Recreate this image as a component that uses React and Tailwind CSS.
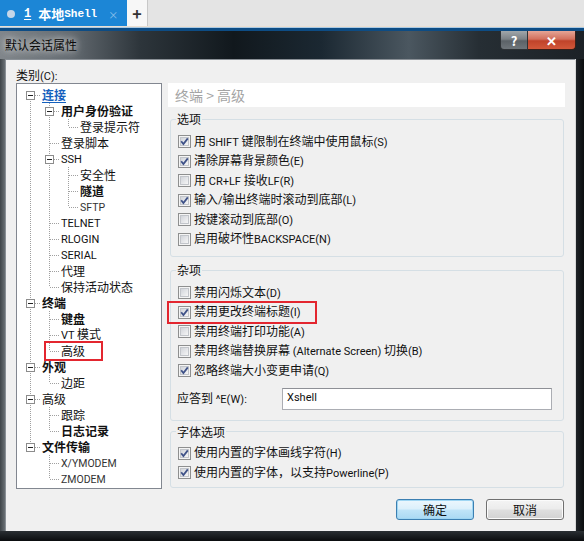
import React from 'react';

const tree = [
  [0, '连接', { exp: 1, bold: 1, blue: 1 }],
  [1, '用户身份验证', { exp: 1, bold: 1 }],
  [2, '登录提示符'],
  [1, '登录脚本'],
  [1, 'SSH', { exp: 1 }],
  [2, '安全性'],
  [2, '隧道', { bold: 1 }],
  [2, 'SFTP', { small: 1 }],
  [1, 'TELNET'],
  [1, 'RLOGIN'],
  [1, 'SERIAL'],
  [1, '代理'],
  [1, '保持活动状态'],
  [0, '终端', { exp: 1, bold: 1 }],
  [1, '键盘', { bold: 1 }],
  [1, 'VT 模式'],
  [1, '高级', { red: 1 }],
  [0, '外观', { exp: 1, bold: 1 }],
  [1, '边距'],
  [0, '高级', { exp: 1 }],
  [1, '跟踪'],
  [1, '日志记录', { bold: 1 }],
  [0, '文件传输', { exp: 1, bold: 1 }],
  [1, 'X/YMODEM', { small: 1 }],
  [1, 'ZMODEM', { small: 1 }],
];

function T({ s, small }) {
  const parts = s.split(/([\x20-\x7e]+)/).filter((p) => p !== '');
  return parts.map((p, i) =>
    /[\x21-\x7e]/.test(p) ? (
      <span key={i} className={"font-['Roboto','Liberation_Sans',sans-serif] " + (small ? 'text-[10.5px]' : 'text-[11px]')}>
        {p}
      </span>
    ) : (
      <span key={i}>{p}</span>
    )
  );
}

function hasLater(i) {
  const L = tree[i][0];
  for (let j = i + 1; j < tree.length; j++) {
    if (tree[j][0] < L) return false;
    if (tree[j][0] === L) return true;
  }
  return false;
}

function ancestor(i, d) {
  for (let j = i - 1; j >= 0; j--) if (tree[j][0] === d) return j;
  return -1;
}

const LINE = '#a0a0a0';

function TreeRow({ i }) {
  const [L, text, o = {}] = tree[i];
  const w = 19 * L + 25;
  const parts = [];
  for (let d = 0; d < L; d++) {
    const a = ancestor(i, d);
    if (a >= 0 && hasLater(a)) {
      const x = 13 + 19 * d + 0.5;
      parts.push(<line key={'v' + d} x1={x} y1={0} x2={x} y2={16} stroke={LINE} strokeDasharray="1 1" />);
    }
  }
  const c = 13 + 19 * L;
  const x = c + 0.5;
  if (i > 0) parts.push(<line key="top" x1={x} y1={0} x2={x} y2={8} stroke={LINE} strokeDasharray="1 1" />);
  if (hasLater(i)) parts.push(<line key="bot" x1={x} y1={8} x2={x} y2={16} stroke={LINE} strokeDasharray="1 1" />);
  parts.push(<line key="h" x1={c + 1} y1={8.5} x2={c + 11} y2={8.5} stroke={LINE} strokeDasharray="1 1" />);
  if (o.exp) {
    parts.push(<rect key="box" x={c - 3.5} y={4.5} width={8} height={8} fill="#fff" stroke="#8c8c8c" />);
    parts.push(<line key="minus" x1={c - 2} y1={8.5} x2={c + 3} y2={8.5} stroke="#222" />);
  }
  return (
    <div className="relative flex h-[16px] items-center">
      <svg width={w} height={16} className="shrink-0">{parts}</svg>
      <span
        className={
          'whitespace-nowrap leading-[16px] text-[12px] ' +
          (o.bold ? 'font-bold ' : '') +
          (o.blue ? 'text-[#1560bd] underline underline-offset-2 ' : o.small ? 'text-[#333] ' : 'text-[#111] ')
        }
      >
        <T s={text} small={o.small} />
      </span>
      {o.red ? <div className="absolute left-[27px] top-[-2px] h-[20px] w-[59px] border-2 border-[#e3262f]" /> : null}
    </div>
  );
}

function Check({ checked }) {
  return (
    <svg width="13" height="13" viewBox="0 0 13 13" className="shrink-0">
      <defs>
        <linearGradient id="cbg" x1="0" y1="0" x2="1" y2="1">
          <stop offset="0" stopColor="#cfd2d8" />
          <stop offset="1" stopColor="#f8f8f8" />
        </linearGradient>
      </defs>
      <rect x="0.5" y="0.5" width="12" height="12" fill="#f4f4f4" stroke="#8e8f8f" />
      <rect x="2.5" y="2.5" width="8" height="8" fill="url(#cbg)" stroke="#c2c5ca" />
      {checked ? (
        <path d="M3.2 6.2 L5.4 9 L9.8 3.4" stroke="#3f5288" strokeWidth="1.8" fill="none" strokeLinejoin="miter" />
      ) : null}
    </svg>
  );
}

function CheckRow({ checked, s, red }) {
  return (
    <div className="relative flex h-[19.5px] items-center gap-[3px] pl-[7px]">
      <Check checked={checked} />
      <span className="whitespace-nowrap text-[12px] leading-[16px] text-[#111]">
        <T s={s} />
      </span>
      {red ? <div className="absolute left-[-4px] top-[-2px] h-[23px] w-[150px] border-2 border-[#e3262f]" /> : null}
    </div>
  );
}

function Group({ title, children, className = '' }) {
  return (
    <fieldset className={'ml-[2px] mr-[1px] rounded-[3px] border border-[#d5dfe5] ' + className}>
      <legend className="ml-[5px] px-[1px] text-[12px] leading-[16px] text-[#111]">{title}</legend>
      {children}
    </fieldset>
  );
}

export default function App() {
  return (
    <div className="h-[541px] w-[584px] overflow-hidden bg-[#e4e4e4] font-['Noto_Sans_CJK_SC','Liberation_Sans',sans-serif] text-[12px]">
      {/* tab bar */}
      <div className="flex h-[27px] border-b border-[#eadfd2] bg-[#e4e4e4]">
        <div className="flex w-[127px] items-center bg-[#1c86d6] pt-[2px]">
          <div className="ml-[7px] h-[8px] w-[8px] rounded-full bg-[#c5d6e8]" />
          <span className="ml-[9px] font-['Liberation_Mono',monospace] text-[12px] font-bold text-white underline underline-offset-2">1</span>
          <span className="ml-[7px] text-[13px] font-bold text-white">本地</span>
          <span className="font-['Liberation_Mono',monospace] text-[11px] font-bold text-white">Shell</span>
          <span className="ml-[11px] text-[10px] text-[#8cc0ea]">×</span>
        </div>
        <div className="flex w-[21px] items-center justify-center border-r border-[#c8c8c8] bg-[#f7f7f7] text-[16px] font-bold leading-none text-[#333]">
          +
        </div>
      </div>
      <div className="h-[1px] bg-[#a9c9e4]" />
      <div className="h-[3px] bg-[#0d4c84]" />

      {/* dialog */}
      <div className="flex h-[510px] flex-col">
        <div className="flex h-[28px] items-start bg-[linear-gradient(90deg,#80868b_0%,#646b71_12%,#2d353b_24%,#11181d_40%,#1b2832_55%,#4b5760_70%,#262e34_82%,#1c2126_100%)]">
          <span className="ml-[5px] mt-[6px] text-[12px] leading-[16px] text-[#0a0a0a] [text-shadow:0_0_6px_#d8d8d8,0_0_10px_#c8c8c8]">
            默认会话属性
          </span>
          <div className="ml-auto mr-[8px] flex">
            <div className="flex h-[19px] w-[28px] items-center justify-center rounded-bl-[4px] border border-t-0 border-[#2e3236] bg-[linear-gradient(180deg,#a1a6aa_0%,#7c8287_45%,#5c6267_55%,#6f757a_100%)] text-[13px] font-bold leading-none text-white">
              ?
            </div>
            <div className="flex h-[19px] w-[48px] items-center justify-center rounded-br-[4px] border border-l-0 border-t-0 border-[#3a1f18] bg-[linear-gradient(180deg,#e5a596_0%,#d2705d_45%,#c0432a_55%,#d2583a_100%)] text-[13px] font-bold leading-none text-white">
              ✕
            </div>
          </div>
        </div>

        <div className="flex h-[472px]">
          <div className="w-[5px] bg-[linear-gradient(90deg,#3f4549,#6a7075)]" />
          <div className="flex w-[570px] flex-col border-l border-t border-[#8a9096] bg-[#f0f0f0] pl-[10px] pt-[7px]">
            <div className="h-[16px] leading-[16px] text-[#111]">
              <T s="类别(C):" />
            </div>
            <div className="flex">
              <div className="h-[406px] w-[146px] border border-[#828790] bg-white pt-[3px]">
                {tree.map((_, i) => (
                  <TreeRow key={i} i={i} />
                ))}
              </div>
              <div className="ml-[6px] flex w-[397px] flex-col">
                <div className="h-[24px] bg-white pl-[7px] text-[14px] leading-[24px] text-[#a4a4a4]">终端 &gt; 高级</div>
                <Group title="选项" className="mt-[4px]">
                  <div className="pb-[7px] pt-[5px]">
                    <CheckRow checked s="用 SHIFT 键限制在终端中使用鼠标(S)" />
                    <CheckRow checked s="清除屏幕背景颜色(E)" />
                    <CheckRow s="用 CR+LF 接收LF(R)" />
                    <CheckRow checked s="输入/输出终端时滚动到底部(L)" />
                    <CheckRow s="按键滚动到底部(O)" />
                    <CheckRow s="启用破坏性BACKSPACE(N)" />
                  </div>
                </Group>
                <Group title="杂项" className="mt-[5px]">
                  <div className="pb-[10px] pt-[5px]">
                    <CheckRow s="禁用闪烁文本(D)" />
                    <CheckRow checked red s="禁用更改终端标题(I)" />
                    <CheckRow s="禁用终端打印功能(A)" />
                    <CheckRow s="禁用终端替换屏幕 (Alternate Screen) 切换(B)" />
                    <CheckRow checked s="忽略终端大小变更申请(Q)" />
                    <div className="mt-[7px] flex h-[22px] items-center pl-[6px]">
                      <span className="w-[105px] whitespace-nowrap text-[#111]">
                        <T s="应答到 ^E(W):" />
                      </span>
                      <div className="flex h-[22px] w-[270px] items-center border border-[#abadb3] border-t-[#8e9096] bg-white pl-[4px] text-[#111]">
                        <T s="Xshell" />
                      </div>
                    </div>
                  </div>
                </Group>
                <Group title="字体选项" className="mt-[3px]">
                  <div className="pb-[4px] pt-[4px]">
                    <CheckRow checked s="使用内置的字体画线字符(H)" />
                    <CheckRow checked s="使用内置的字体，以支持Powerline(P)" />
                  </div>
                </Group>
              </div>
            </div>
            <div className="mt-[10px] flex justify-end gap-[12px] pr-[11px]">
              <div className="flex h-[21px] w-[78px] items-center justify-center rounded-[3px] border border-[#3c7fb1] bg-[linear-gradient(180deg,#ecf7fd_0%,#dcf0fb_45%,#bfe4f8_55%,#a9d9f3_100%)] text-[#111] shadow-[inset_0_0_0_1px_#9fd6f3]">
                确定
              </div>
              <div className="flex h-[21px] w-[78px] items-center justify-center rounded-[3px] border border-[#707070] bg-[linear-gradient(180deg,#f4f4f4_0%,#ececec_45%,#dedede_55%,#d2d2d2_100%)] text-[#111] shadow-[inset_0_0_0_1px_#fbfbfb]">
                取消
              </div>
            </div>
          </div>
          <div className="w-[9px] border-l border-[#d8d8d8] bg-[linear-gradient(90deg,#1f2428,#0b0d0f)]" />
        </div>
        <div className="h-[10px] bg-[linear-gradient(180deg,#2a2f33,#0a0c0e)]" />
      </div>
    </div>
  );
}
